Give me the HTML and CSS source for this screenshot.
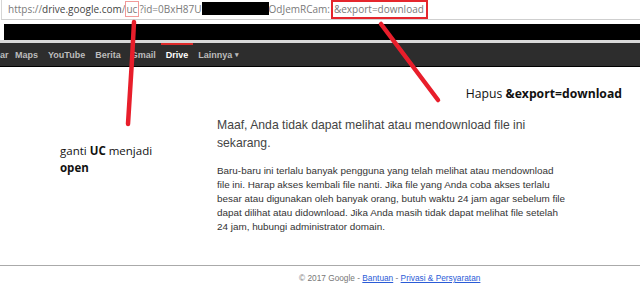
FILE: index.html
```html
<!DOCTYPE html>
<html lang="id">
<head>
    <meta charset="UTF-8">
    <meta name="viewport" content="width=device-width, initial-scale=1.0">
    <title>Google Drive - Kuota terlampaui</title>
    <link rel="stylesheet" href="styles.css">
</head>
<body>
    <!-- address bar -->
    <div class="urlbar">
        <span class="scheme">https://</span><span class="host">drive.google.com</span>/<span class="mark-uc">uc</span>?id=0BxH87U<span class="redact"></span>OdJemRCam:<span class="mark-export">&amp;export=download</span>
    </div>
    <div class="blackstrip"></div>

    <!-- google bar -->
    <div class="gbar">
        <span class="gbar-item">ar</span>
        <span class="gbar-item">Maps</span>
        <span class="gbar-item">YouTube</span>
        <span class="gbar-item">Berita</span>
        <span class="gbar-item">Gmail</span>
        <span class="gbar-item active">Drive</span>
        <span class="gbar-item">Lainnya <span class="caret">&#9662;</span></span>
    </div>

    <div class="content">
        <div class="note-left">
            ganti <b>UC</b> menjadi<br>
            <b>open</b>
        </div>
        <div class="main">
            <div class="note-right">Hapus <b>&amp;export=download</b></div>
            <h1 class="title">Maaf, Anda tidak dapat melihat atau mendownload file ini sekarang.</h1>
            <p class="desc">Baru-baru ini terlalu banyak pengguna yang telah melihat atau mendownload file ini. Harap akses kembali file nanti. Jika file yang Anda coba akses terlalu besar atau digunakan oleh banyak orang, butuh waktu 24 jam agar sebelum file dapat dilihat atau didownload. Jika Anda masih tidak dapat melihat file setelah 24 jam, hubungi administrator domain.</p>
        </div>
    </div>

    <div class="footer">
        &copy; 2017 Google - <a href="#">Bantuan</a> - <a href="#">Privasi &amp; Persyaratan</a>
    </div>

    <!-- coretan merah -->
    <svg class="scribble" width="640" height="305" viewBox="0 0 640 305">
        <path d="M134 22 L132 60 L128 124" />
        <path d="M381 24 L438 100" />
    </svg>
</body>
</html>
```

FILE: styles.css
```css
body{
    margin: 0;
    width: 640px;
    height: 305px;
    overflow: hidden;
    position: relative;
    background-color: #fff;
    font-family: Arial, "Liberation Sans", sans-serif;
}

/* address bar */
.urlbar{
    height: 20px;
    box-sizing: border-box;
    border-left: 1px solid #d6d6d6;
    border-bottom: 1px solid #cfcfcf;
    margin-left: 1px;
    padding-left: 6px;
    font-family: "Open Sans", "Noto Sans", sans-serif;
    font-size: 10px;
    line-height: 19px;
    color: #7a7a7a;
    white-space: nowrap;
}
.host{
    color: #444;
}
.mark-uc{
    display: inline-block;
    border: 1px solid #f29a9a;
    line-height: 14px;
    padding: 0 1px 0 0;
}
.redact{
    display: inline-block;
    width: 67px;
    height: 13px;
    background-color: #000;
    vertical-align: -2px;
}
.mark-export{
    display: inline-block;
    border: 2px solid #e5262d;
    line-height: 15px;
    padding: 0 2px 0 1px;
    margin-left: 1px;
}
.blackstrip{
    height: 16px;
    margin: 4px 0 0 4px;
    background-color: #000;
}

/* google bar */
.gbar{
    display: flex;
    height: 23px;
    border-top: 3px solid #d9d9d9;
    border-bottom: 1px solid #000;
    background-color: #2d2d2d;
}
.gbar-item{
    display: flex;
    align-items: center;
    padding: 0 5px;
    font-size: 9px;
    font-weight: bold;
    color: #bcbcbc;
}
.gbar-item:first-child{
    padding-left: 0;
    padding-right: 1.5px;
}
.gbar-item.active{
    color: #fff;
    box-shadow: inset 0 2px 0 #dd2a2a;
}
.caret{
    font-size: 7px;
    margin-left: 3px;
}

/* isi */
.content{
    display: flex;
    height: 198px;
}
.note-left{
    width: 157px;
    padding: 75px 0 0 60px;
    font-family: "Open Sans", "Noto Sans", sans-serif;
    font-size: 11.5px;
    line-height: 17px;
    color: #111;
}
.main{
    flex: 1;
}
.note-right{
    text-align: right;
    padding: 19px 18px 0 0;
    font-family: "Open Sans", "Noto Sans", sans-serif;
    font-size: 12.2px;
    line-height: 15px;
    color: #111;
}
.title{
    width: 330px;
    margin: 15px 0 0;
    font-size: 12.2px;
    font-weight: normal;
    line-height: 18px;
    color: #444;
}
.desc{
    width: 351px;
    margin: 12px 0 0;
    font-size: 9.9px;
    line-height: 14px;
    color: #333;
}

.footer{
    border-top: 1px solid #aaa;
    padding: 6px 0 0 299px;
    font-size: 8.3px;
    line-height: 12px;
    color: #777;
}
.footer a{
    color: #2a5bd7;
}

.scribble{
    position: absolute;
    top: 0;
    left: 0;
    pointer-events: none;
}
.scribble path{
    fill: none;
    stroke: #e81e2b;
    stroke-width: 4.5;
    stroke-linecap: round;
    stroke-linejoin: round;
}
```
